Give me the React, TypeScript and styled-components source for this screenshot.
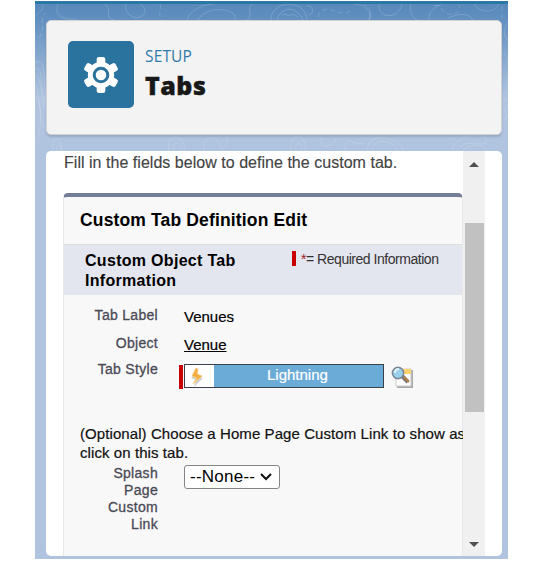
import React from "react";
import styled, { createGlobalStyle } from "styled-components";

const Global = createGlobalStyle`
  * { box-sizing: border-box; }
  body { margin: 0; background: #fff; font-family: "Liberation Sans", Arial, sans-serif; }
`;

const Frame = styled.main`
  position: relative;
  width: 473px;
  height: 558px;
  margin: 1px 0 0 35px;
  padding: 19px 6px 3px 11px;
  overflow: hidden;
  background: linear-gradient(#5688ba 0, #5c8cbd 12px, #b0c4df 98px, #b0c4df 100%);
  &::before {
    content: "";
    position: absolute;
    inset: 0 0 auto;
    height: 3px;
    background: #2a78a3;
  }
`;

const Contours = styled.svg`
  position: absolute;
  left: 0;
  top: 3px;
  fill: none;
  stroke: #fff;
  stroke-opacity: 0.17;
`;

const Header = styled.header`
  position: relative;
  display: flex;
  align-items: flex-start;
  gap: 11px;
  height: 115px;
  padding: 20px 21px;
  border: 1px solid #d2d2d4;
  border-radius: 5px;
  background: #f3f3f3;
  box-shadow: 0 2px 2px rgba(60, 80, 110, 0.22);
`;

const GearTile = styled.div`
  display: grid;
  place-items: center;
  width: 66px;
  height: 67px;
  border-radius: 5px;
  background: #2a739e;
`;

const Titles = styled.div`
  padding-top: 5px;
  font-family: "Open Sans", sans-serif;
`;

const Eyebrow = styled.div`
  font-size: 15.5px;
  line-height: 20px;
  letter-spacing: 0.15px;
  color: #2e7aab;
`;

const PageTitle = styled.h1`
  margin: 3px 0 0;
  font-size: 25px;
  font-weight: 800;
  line-height: 32px;
  letter-spacing: 0.5px;
  color: #181818;
  -webkit-text-stroke: 0.4px #181818;
`;

const Panel = styled.section`
  position: relative;
  display: flex;
  height: 405px;
  margin-top: 16px;
  padding: 0 17px;
  border-radius: 5px;
  background: #fff;
  overflow: hidden;
`;

const Viewport = styled.div`
  width: 400px;
  overflow: hidden;
`;

const Intro = styled.p`
  margin: 0;
  padding: 1px 0 0 1px;
  height: 42px;
  font-size: 16px;
  line-height: 22px;
  letter-spacing: 0.03px;
  white-space: nowrap;
  color: #444;
  -webkit-text-stroke: 0.15px #444;
`;

const Card = styled.div`
  height: 380px;
  border: 1px solid #e9e9eb;
  border-top: 4px solid #747e96;
  border-radius: 5px;
  background: #f8f8f8;
`;

const CardTitle = styled.h2`
  margin: 0;
  height: 48px;
  padding-left: 16px;
  border-bottom: 1px solid #dddddb;
  font-size: 17.5px;
  line-height: 46px;
  letter-spacing: 0.15px;
  white-space: nowrap;
  color: #000;
`;

const SectionBar = styled.div`
  display: flex;
  height: 50px;
  padding: 6px 0 0 21px;
  background: #e3e5ef;
`;

const SectionTitle = styled.h3`
  width: 207px;
  margin: 0;
  font-size: 16px;
  line-height: 19.5px;
  letter-spacing: 0.3px;
  color: #000;
`;

const Required = styled.div`
  display: flex;
  height: 15px;
  font-size: 14px;
  line-height: 16px;
  letter-spacing: -0.47px;
  white-space: nowrap;
  color: #333;
`;

const RequiredBar = styled.i<{ $height: number; $gap: number }>`
  width: 3.5px;
  height: ${(p) => p.$height}px;
  margin-right: ${(p) => p.$gap}px;
  background: #c90000;
`;

const Star = styled.span`
  color: #a0202a;
`;

const Row = styled.div<{ $height: number }>`
  display: grid;
  grid-template-columns: 94px 1fr;
  column-gap: 26px;
  height: ${(p) => p.$height}px;
`;

const Label = styled.div<{ $top?: number }>`
  margin-top: ${(p) => p.$top ?? 0}px;
  font-size: 14px;
  line-height: 17px;
  letter-spacing: 0.3px;
  text-align: right;
  color: #4a4a56;
  -webkit-text-stroke: 0.3px #4a4a56;
`;

const Value = styled.div<{ $top?: number }>`
  margin-top: ${(p) => p.$top ?? 0}px;
  font-size: 15px;
  line-height: 20px;
  color: #000;
  -webkit-text-stroke: 0.2px #000;
`;

const ObjectLink = styled.a`
  text-decoration: underline;
  text-underline-offset: 1px;
  color: #000;
`;

const StylePicker = styled.div`
  display: flex;
  align-items: flex-start;
  margin-left: -5px;
`;

const StyleBar = styled(RequiredBar)`
  margin-top: 1px;
`;

const Swatch = styled.div`
  display: flex;
  width: 200px;
  height: 24px;
  margin-right: 7px;
  border: 1px solid #3b4148;
  background: #6aabd8;
`;

const SwatchIcon = styled.div`
  width: 29px;
  background: #fff;
`;

const SwatchName = styled.div`
  flex: 1;
  padding-left: 53px;
  font-size: 15px;
  line-height: 19px;
  color: #fff;
  -webkit-text-stroke: 0.2px #fff;
`;

const Hint = styled.p`
  width: 480px;
  height: 38px;
  margin: 0;
  padding-left: 16px;
  font-size: 15px;
  line-height: 19px;
  letter-spacing: 0.08px;
  white-space: nowrap;
  color: #111;
  -webkit-text-stroke: 0.2px #111;
`;

const Select = styled.button`
  display: flex;
  align-items: center;
  gap: 5px;
  width: 96px;
  height: 24px;
  margin: 3px 0 0;
  padding: 0 5px;
  border: 1px solid #858585;
  border-radius: 3px;
  background: #fff;
  font: 17px/22px "Liberation Sans", Arial, sans-serif;
  letter-spacing: 0.25px;
  color: #000;
`;

const Scrollbar = styled.div`
  display: flex;
  flex-direction: column;
  align-items: center;
  width: 22px;
  height: 405px;
  background: #f0f0f0;
`;

const Thumb = styled.div`
  width: 19px;
  height: 189px;
  margin: 56px 0 130px;
  background: #c1c1c1;
`;

const Arrow = styled.svg`
  display: block;
  flex: none;
  width: 10px;
  height: 5px;
  fill: #505050;
`;

const UpArrow = styled(Arrow)`
  margin-top: 11px;
`;

export default function App() {
  return (
    <>
      <Global />
      <Frame>
        <Contours width="473" height="160" viewBox="35 4 473 160">
          <path d="M42 4c4 7-5 8-7 13M58 4c-5 13 7 16 19 15M105 4c8 5-2 15 10 16M126 4c-3 8 7 16 14 13 9-4 4-11 0-13M187 20c3-10 14-15 27-16M198 20c4-8 18-13 30-9 6 2 8 5 7 9M252 4c-6 5 2 12-5 16M271 20c-1-19 34-23 36 0M277 20c2-12 19-16 26 0M282 15l4-1 2 2 5-2 5 3M307 6c6-1 8 7 2 9M354 4c14 1 18 10 15 16M364 4c7 4 8 11 5 16M379 4c-2 16 21 15 23 0M411 4c-2 8 1 13 6 16M441 4c-8 5-13 8-12 16M474 4c6 9 19 10 25 0M448 18c11-5 21-5 25 2" />
          <path strokeDasharray="5 3" d="M319 17c-2-8 9-9 16-6 8 4 14 2 17-2M434 6c9-3 6 8 16 8 9 0 11-5 9-9M160 4c2 6-3 11 2 16M39 38c9-12-2-17 7-25M502 6v15" />
          <path strokeOpacity="0.14" d="M508 22c-5 8-5 14 0 18M502 55c3-5 6 3 6 8M502 92c4 5 6-7 6-16M503 103l5-6M503 113l5-7M504 121l4-7M35 63c11-8 9 20 11 40M35 69c8-6 5 15 10 36M35 76c6-3 5 17 9 31M35 85c5 4 3 24 9 43M35 98c6-3 7 27 3 40M53 151c-2-16 8-16 9 0M57 151c-1-9 4-9 4 0M169 151c-5-20 19-17 15 0M174 151c-2-12 8-10 7 0M205 151c-5-15 12-18 15-5 2 7 7 2 8-10M291 151c-2-21 15-18 15 0M296 151c-2-12 7-9 6 0M321 138c-1 13 14 9 15 0M344 151c5-20 9-3 19-8M368 151c-4-22 38-12 35 0M373 151c-1-16 25-9 24 0M452 151c4-20 38-20 34-9-3 6-20-6-29 9M463 151c5-8 21-8 23 0" />
        </Contours>
        <Header>
          <GearTile>
            <svg width="36" height="38" viewBox="-18 -19 36 38">
              <g fill="#fff">
                {[0, 60, 120].map((angle) => (
                  <rect key={angle} x="-4.3" y="-18" width="8.6" height="36" rx="2.3" transform={`rotate(${angle})`} />
                ))}
                <circle r="13.2" />
              </g>
              <circle r="6.8" fill="#fff" stroke="#2a739e" strokeWidth="3" />
            </svg>
          </GearTile>
          <Titles>
            <Eyebrow>SETUP</Eyebrow>
            <PageTitle>Tabs</PageTitle>
          </Titles>
        </Header>
        <Panel>
          <Viewport>
            <Intro>Fill in the fields below to define the custom tab.</Intro>
            <Card>
              <CardTitle>Custom Tab Definition Edit</CardTitle>
              <SectionBar>
                <SectionTitle>Custom Object Tab<br />Information</SectionTitle>
                <Required>
                  <RequiredBar $height={15} $gap={5.5} />
                  <span><Star>*</Star>= Required Information</span>
                </Required>
              </SectionBar>
              <Row $height={40}>
                <Label $top={12}>Tab Label</Label>
                <Value $top={12}>Venues</Value>
              </Row>
              <Row $height={29}>
                <Label>Object</Label>
                <Value><ObjectLink href="#">Venue</ObjectLink></Value>
              </Row>
              <Row $height={60}>
                <Label $top={-3}>Tab Style</Label>
                <StylePicker>
                  <StyleBar $height={24} $gap={1.5} />
                  <Swatch>
                    <SwatchIcon>
                      <svg width="29" height="22" viewBox="0 0 29 22">
                        <path d="m13 5-7 8 5 2-2 7 9-9-5-2z" fill="#999" opacity=".45" />
                        <path d="m11 3-4 8 5 2-4 6 9-8-5-2 1-5z" fill="#f2ad3d" stroke="#f7cb80" />
                      </svg>
                    </SwatchIcon>
                    <SwatchName>Lightning</SwatchName>
                  </Swatch>
                  <svg width="23" height="25" viewBox="0 -1 23 25">
                    <path d="M6 5h16v18H6z" fill="#aaa" />
                    <path d="M5 4h15v17H5z" fill="#fff" stroke="#ccc" />
                    <path d="M12 4h8v5h-8z" fill="#ffd270" />
                    <path d="m11 11 6 6" stroke="#777" strokeWidth="4" />
                    <path d="m13 12 5 5" stroke="#b98143" strokeWidth="2" />
                    <circle cx="7" cy="8" r="5.6" fill="#9bd0ec" stroke="#7c8995" strokeWidth="1.6" />
                    <path d="M4 8c0-3 2-4 4-4" fill="none" stroke="#def2fc" strokeWidth="2" />
                  </svg>
                </StylePicker>
              </Row>
              <Hint>(Optional) Choose a Home Page Custom Link to show as<br />click on this tab.</Hint>
              <Row $height={80}>
                <Label $top={3}>Splash<br />Page<br />Custom<br />Link</Label>
                <Select>
                  --None--
                  <svg width="12" height="8" viewBox="0 0 12 8">
                    <path d="m1 1 5 5 5-5" fill="none" stroke="#111" strokeWidth="2" />
                  </svg>
                </Select>
              </Row>
            </Card>
          </Viewport>
          <Scrollbar>
            <UpArrow viewBox="0 0 10 6" preserveAspectRatio="none"><path d="M0 6 5 0l5 6z" /></UpArrow>
            <Thumb />
            <Arrow viewBox="0 0 10 6" preserveAspectRatio="none"><path d="M0 0h10L5 6z" /></Arrow>
          </Scrollbar>
        </Panel>
      </Frame>
    </>
  );
}
